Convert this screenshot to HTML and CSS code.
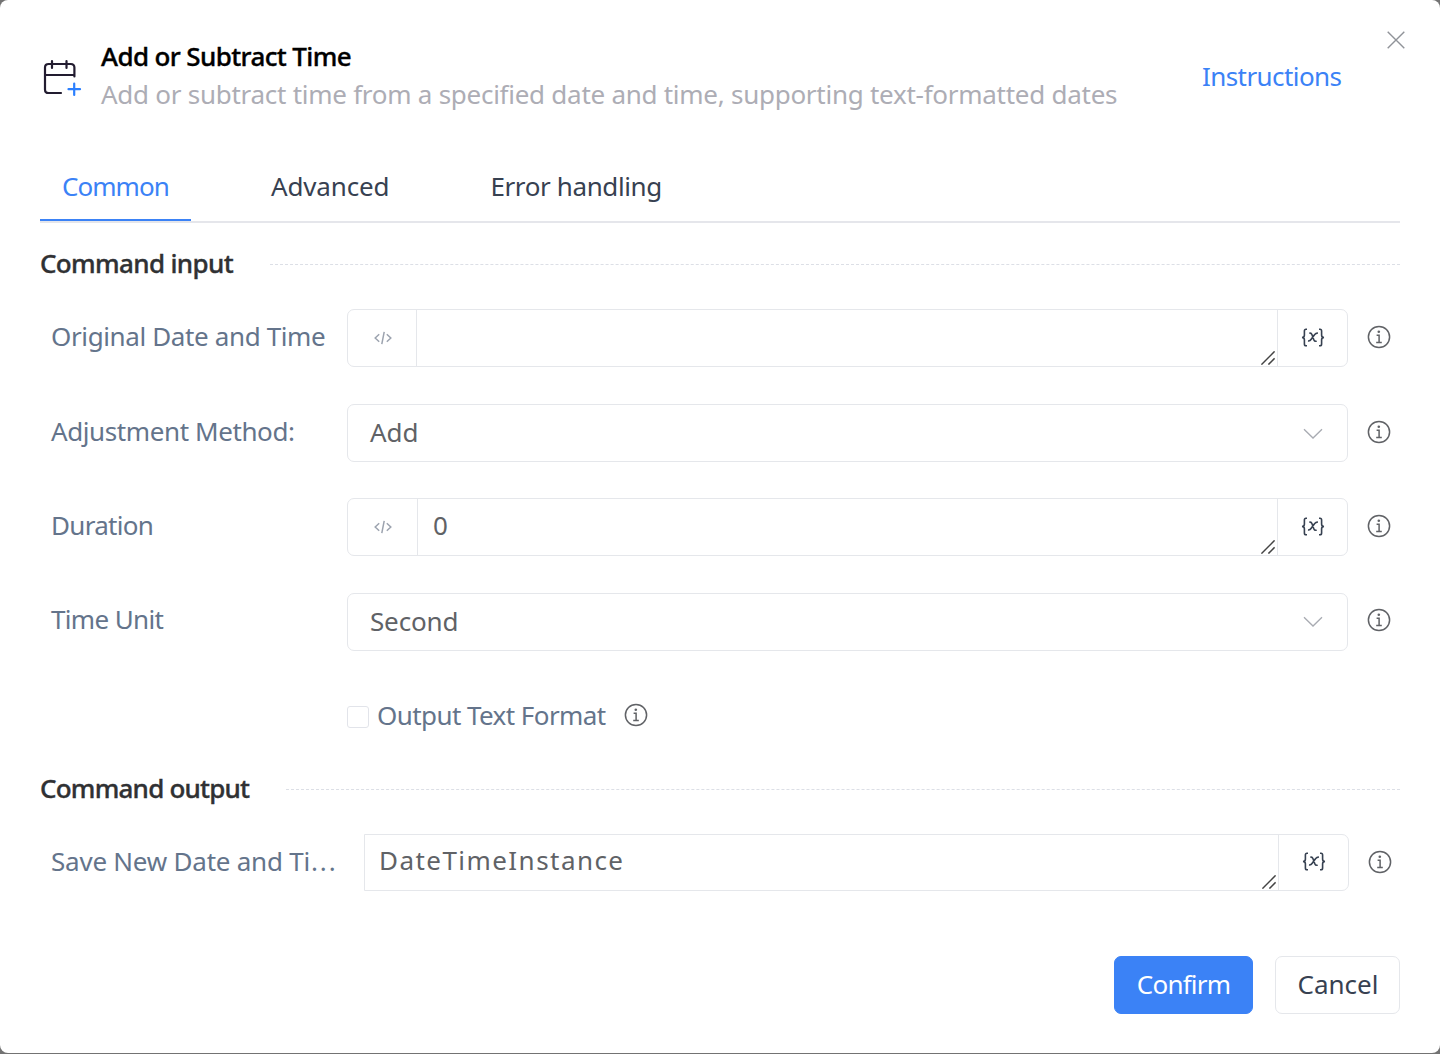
FILE: index.html
```html
<!DOCTYPE html>
<html lang="en">
<head>
<meta charset="utf-8">
<title>Add or Subtract Time</title>
<link rel="stylesheet" href="styles.css">
</head>
<body>
<svg class="defs" width="0" height="0" aria-hidden="true">
  <symbol id="info" viewBox="0 0 24 24"><circle cx="12" cy="12" r="10.6" fill="none" stroke="currentColor" stroke-width="1.500"/><circle cx="11.800" cy="6.700" r="1.300" fill="currentColor"/><path d="M9.600 10.200h2.500v7.300M9.200 17.500h5.600" fill="none" stroke="currentColor" stroke-width="1.500"/></symbol>
  <symbol id="code" viewBox="0 0 18 14"><path d="M5.200 3.300 1.200 7l4 3.700M12.800 3.300l4 3.700-4 3.700M10.200.8 7.800 13.200" fill="none" stroke="currentColor" stroke-width="1.500"/></symbol>
  <symbol id="var" viewBox="0 0 24 20"><path d="M6 1.200H5Q3.400 1.200 3.400 3v4.300Q3.400 9.400 1 9.500 3.400 9.600 3.400 11.700V16q0 1.800 1.600 1.800h1M18 1.200h1q1.600 0 1.600 1.800v4.300q0 2.100 2.400 2.200-2.400.1-2.400 2.200V16q0 1.800-1.600 1.800h-1" fill="none" stroke="currentColor" stroke-width="1.600"/><path d="M8.300 5.300q2-.5 2.600 1.200l2 5.500q.6 1.700 2.800 1.200M16.900 5.200q-1.800-.3-3.200 1.400l-3.500 4.700q-1.200 1.900-3.200 1.600" fill="none" stroke="currentColor" stroke-width="1.600"/></symbol>
  <symbol id="chev" viewBox="0 0 20 12"><path d="m1 1.200 9 8.800 9-8.800" fill="none" stroke="currentColor" stroke-width="1.300"/></symbol>
  <symbol id="grip" viewBox="0 0 14 14"><path d="M.4 13.600 13.600.4M7.400 13.600l6.200-6.200" fill="none" stroke="currentColor" stroke-width="1.500"/></symbol>
</svg>
<main class="dialog">
  <header class="head">
    <svg class="cal" viewBox="0 0 40 40" fill="none" stroke="#221c30" stroke-width="2.200" stroke-linecap="round"><path d="M32.400 17.500V8.600q0-3.600-3.600-3.600H6.600Q3 5 3 8.600v21.800Q3 34 6.600 34H19M3 16h29M10 2v7M24.500 2v7"/><path d="M26.500 30.200h11.500M32.200 24.500v11.500" stroke="#2b7fff"/></svg>
    <div class="titles"><h1>Add or Subtract Time</h1><p>Add or subtract time from a specified date and time, supporting text-formatted dates</p></div>
    <a class="link">Instructions</a>
    <svg class="close" viewBox="0 0 18 18"><path d="m.7.700 16.600 16.600M17.300.7.700 17.300" stroke="#909399" stroke-width="1.400"/></svg>
  </header>
  <nav class="tabs"><a class="tab on">Common</a><a class="tab advanced">Advanced</a><a class="tab errors">Error handling</a></nav>
  <h2 class="sec"><span>Command input</span></h2>
  <div class="row r1"><label>Original Date and Time</label><div class="field"><i class="pre"><svg><use href="#code"/></svg></i><div class="val"><svg class="grip"><use href="#grip"/></svg></div><i class="suf"><svg><use href="#var"/></svg></i></div><svg class="info"><use href="#info"/></svg></div>
  <div class="row r2"><label>Adjustment Method:</label><div class="field"><div class="val pick"><span>Add</span><svg class="chev"><use href="#chev"/></svg></div></div><svg class="info"><use href="#info"/></svg></div>
  <div class="row r3"><label>Duration</label><div class="field"><i class="pre"><svg><use href="#code"/></svg></i><div class="val"><span>0</span><svg class="grip"><use href="#grip"/></svg></div><i class="suf"><svg><use href="#var"/></svg></i></div><svg class="info"><use href="#info"/></svg></div>
  <div class="row r4"><label>Time Unit</label><div class="field"><div class="val pick"><span>Second</span><svg class="chev"><use href="#chev"/></svg></div></div><svg class="info"><use href="#info"/></svg></div>
  <div class="check"><i class="box"></i><span>Output Text Format</span><svg class="info"><use href="#info"/></svg></div>
  <h2 class="sec out"><span>Command output</span></h2>
  <div class="row r5"><label>Save New Date and Ti<span class="dots">...</span></label><div class="field"><div class="val"><span>DateTimeInstance</span><svg class="grip"><use href="#grip"/></svg></div><i class="suf"><svg><use href="#var"/></svg></i></div><svg class="info"><use href="#info"/></svg></div>
  <footer class="foot"><button class="btn ok">Confirm</button><button class="btn cancel">Cancel</button></footer>
</main>
</body>
</html>
```
FILE: styles.css
```css
* { box-sizing: border-box; }
body { margin: 0; background: #737373; font: 26px/38px "Noto Sans", sans-serif; color: #374151; }
.defs { display: block; height: 0; }
.dialog { height: 1053px; padding: 37px 40px 0; background: #fff; border-radius: 8px; display: flex; flex-direction: column; white-space: nowrap; }
h1, h2, p { margin: 0; font-size: 26px; }
h1 { color: #000; font-weight: 500; letter-spacing: -.62px; -webkit-text-stroke: .35px; }
p { color: #adadb5; letter-spacing: -.265px; }
.head { display: flex; height: 115px; align-items: flex-start; }
.cal { width: 40px; height: 40px; margin: 22px 20px 0 2px; flex: none; }
.titles { width: 1101px; margin-left: -1px; flex: none; }
.link { color: #3b82f6; margin-top: 20px; width: 185px; flex: none; letter-spacing: -.58px; }
.close { width: 18px; height: 18px; margin-top: -6.500px; flex: none; }
.tabs { display: flex; height: 71px; border-bottom: 2px solid #e5e6eb; }
.tab { height: 69px; padding: 15px 22px 0; margin-right: 58px; }
.tab.on { color: #3b82f6; border-bottom: 2px solid #3b82f6; width: 151px; letter-spacing: -.95px; }
.advanced { letter-spacing: -.15px; }
.tab.errors { letter-spacing: -.38px; padding-left: 21px; }
.sec { display: flex; align-items: center; height: 38px; margin-top: 22px; color: #303133; font-weight: 500; letter-spacing: -.65px; -webkit-text-stroke: .35px; }
.sec span { padding-bottom: 2px; }
.sec::after { content: ""; flex: 1; margin-left: 37px; border-top: 1px dashed #dcdfe6; }
.row { display: flex; height: 58px; align-items: center; }
.row label { width: 307px; padding: 0 0 4px 11px; color: #64748b; flex: none; }
.field { display: flex; width: 1001px; height: 100%; border: 1px solid #e5e7eb; border-radius: 7px; flex: none; }
.pre, .suf { width: 69px; display: flex; align-items: center; justify-content: center; flex: none; }
.pre { color: #9ca3af; border-right: 1px solid #e5e7eb; padding-left: 1px; }
.suf { width: 70px; border-left: 1px solid #e5e7eb; }
.pre svg { width: 18px; height: 14px; }
.suf svg { width: 24px; height: 20px; }
.val { flex: 1; display: flex; justify-content: space-between; padding: 7px 2px 0 15px; color: #606266; }
.val.pick { padding: 8px 24px 0 22px; }
.chev { width: 20px; height: 12px; margin-top: 15px; color: #a8abb2; }
.grip { width: 14px; height: 14px; margin: 34px 0 0 auto; color: #444; }
.info { width: 24px; height: 24px; margin: 0 0 3px 18.5px; color: #606266; flex: none; }
.r1 { margin-top: 26px; }
.r1 label { letter-spacing: -.37px; }
.r2 { margin-top: 37px; }
.r2 label { letter-spacing: -.4px; }
.r3 { margin-top: 36px; }
.r3 label { letter-spacing: -.7px; }
.r3 .pre { width: 70px; }
.r4 { margin-top: 37px; }
.row.r4 label { letter-spacing: -.65px; padding-bottom: 6px; }
.r4 .val { letter-spacing: -.15px; }
.r4 .chev { margin-top: 14px; }
.r4 .info { margin-bottom: 5px; }
.check { display: flex; align-items: center; height: 38px; margin: 46px 0 0 307px; color: #64748b; letter-spacing: -.57px; }
.check span { padding-bottom: 2px; }
.box { width: 22px; height: 22px; border: 1px solid #e2e4ea; border-radius: 3px; margin-right: 8px; margin-top: 1px; }
.out { margin-top: 35px; letter-spacing: -.78px; }
.r5 { margin-top: 26px; height: 57px; }
.row.r5 label { width: 324px; letter-spacing: -.23px; padding-bottom: 3px; }
.dots { letter-spacing: 1.900px; margin-left: 1px; }
.r5 .field { width: 985px; border-radius: 0 7px 7px 0; }
.r5 .val { padding: 6px 2px 0 14px; letter-spacing: 1.45px; }
.r5 .suf { padding-bottom: 2px; }
.r5 .info { margin-bottom: 2px; }
.foot { display: flex; justify-content: flex-end; gap: 22px; margin-top: 65px; }
.btn { height: 58px; width: 125px; border: 1px solid #e5e7eb; border-radius: 7px; background: #fff; font: inherit; color: #374151; padding: 0 0 2px; }
.btn.cancel { padding-left: 1px; }
.btn.ok { width: 139px; background: #3b82f6; border-color: #3b82f6; color: #fff; letter-spacing: -.8px; }
```
